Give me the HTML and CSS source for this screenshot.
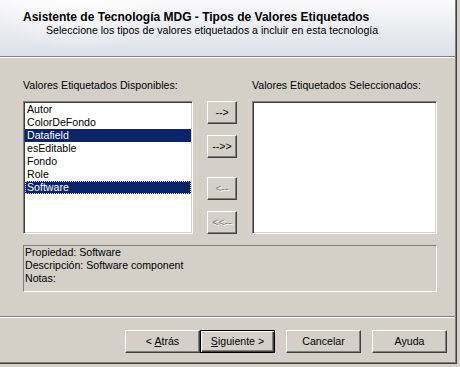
FILE: index.html
```html
<!DOCTYPE html>
<html lang="es">
<head>
<meta charset="utf-8">
<title>Asistente de Tecnología MDG</title>
<link rel="stylesheet" href="styles.css">
</head>
<body>
<div class="frame">
  <div class="window">
    <header class="hdr">
      <div class="title">Asistente de Tecnología MDG - Tipos de Valores Etiquetados</div>
      <div class="subtitle">Seleccione los tipos de valores etiquetados a incluir en esta tecnología</div>
    </header>
    <main class="content">
      <div class="pick">
        <div class="lbl lbl-left">Valores Etiquetados Disponibles:</div>
        <div class="lbl lbl-right">Valores Etiquetados Seleccionados:</div>
        <ul class="list list-left">
          <li>Autor</li>
          <li>ColorDeFondo</li>
          <li class="sel">Datafield</li>
          <li>esEditable</li>
          <li>Fondo</li>
          <li>Role</li>
          <li class="sel focus">Software</li>
        </ul>
        <div class="movers">
          <button class="btn mv">--&gt;</button>
          <button class="btn mv">--&gt;&gt;</button>
          <button class="btn mv gap-big" disabled>&lt;--</button>
          <button class="btn mv" disabled>&lt;&lt;--</button>
        </div>
        <ul class="list list-right"></ul>
      </div>
      <div class="info">
        <div>Propiedad: Software</div>
        <div>Descripción: Software component</div>
        <div>Notas:</div>
      </div>
    </main>
    <div class="sep"></div>
    <footer class="foot">
      <button class="btn fb">&lt; <u>A</u>trás</button>
      <button class="btn fb def"><u>S</u>iguiente &gt;</button>
      <button class="btn fb ml">Cancelar</button>
      <button class="btn fb ml">Ayuda</button>
    </footer>
  </div>
</div>
</body>
</html>
```
FILE: styles.css
```css
html, body {
  margin: 0;
  padding: 0;
  background: #d4d0c8;
}
body {
  font-family: "Liberation Sans", Arial, sans-serif;
  font-size: 10.6px;
  line-height: 13px;
  color: #000;
}
.frame {
  width: 456px;
  height: 363px;
  border-right: 1px solid #404040;
  border-bottom: 1px solid #404040;
}
.window {
  height: 362px;
  border-right: 1px solid #808080;
  border-bottom: 1px solid #808080;
  display: flex;
  flex-direction: column;
}
.hdr {
  height: 57px;
  box-sizing: border-box;
  padding-top: 10px;
  padding-left: 23px;
  border-bottom: 1px solid #808080;
  background:
    radial-gradient(ellipse 120px 60px at 80px 10px, rgba(255,255,255,0.6), rgba(255,255,255,0) 70%),
    linear-gradient(180deg, #fbfbfc 0%, #eceef2 45%, #dce0e8 100%);
}
.title {
  font-weight: bold;
  font-size: 12px;
  line-height: 14px;
}
.subtitle {
  padding-left: 23px;
  line-height: 13px;
}
.content {
  border-top: 1px solid #fff;
  padding: 21px 0 0 23px;
}
.pick {
  display: grid;
  grid-template-columns: 170px 44px 200px;
  row-gap: 9px;
}
.lbl-left { grid-column: 1; grid-row: 1; }
.lbl-right { grid-column: 3; grid-row: 1; margin-left: 15px; }
.list {
  margin: 0;
  padding: 0;
  list-style: none;
  height: 133px;
  box-sizing: border-box;
  background: #fff;
  border-top: 1px solid #808080;
  border-left: 1px solid #808080;
  border-right: 1px solid #fff;
  border-bottom: 1px solid #fff;
  box-shadow: inset 1px 1px 0 #404040, inset -1px -1px 0 #d4d0c8;
  padding: 1px;
}
.list-left { grid-column: 1; grid-row: 2; }
.list-right { grid-column: 3; grid-row: 2; margin-left: 15px; }
.list li {
  height: 13px;
  line-height: 13px;
  padding-left: 2px;
  white-space: nowrap;
}
.list li.sel {
  background: #0a246a;
  color: #fff;
}
.list li.focus {
  outline: 1px dotted #f5db95;
  outline-offset: -1px;
}
.movers {
  grid-column: 2;
  grid-row: 2;
  margin-left: 14px;
  width: 30px;
  display: flex;
  flex-direction: column;
  gap: 11px;
}
.btn {
  font: inherit;
  color: #000;
  background: #d4d0c8;
  box-sizing: border-box;
  height: 23px;
  padding: 0;
  margin: 0;
  border-top: 1px solid #fff;
  border-left: 1px solid #fff;
  border-right: 1px solid #404040;
  border-bottom: 1px solid #404040;
  box-shadow: inset -1px -1px 0 #808080;
  line-height: 19px;
  text-align: center;
}
.btn:disabled {
  color: #808080;
  text-shadow: 1px 1px 0 #fff;
}
.mv { width: 30px; }
.gap-big { margin-top: 8px; }
.info {
  margin-top: 11px;
  width: 414px;
  height: 47px;
  box-sizing: border-box;
  border-top: 1px solid #808080;
  border-left: 1px solid #808080;
  border-right: 1px solid #fff;
  border-bottom: 1px solid #fff;
  padding: 0 0 0 1px;
}
.sep {
  margin-top: 24px;
  height: 0;
  border-top: 1px solid #808080;
  border-bottom: 1px solid #fff;
}
.foot {
  display: flex;
  justify-content: flex-end;
  padding: 12px 8px 0 0;
}
.fb { width: 75px; }
.fb u { text-decoration: underline; }
.def {
  border: 1px solid #000;
  box-shadow: inset 1px 1px 0 #fff, inset -1px -1px 0 #404040, inset -2px -2px 0 #808080;
}
.ml { margin-left: 11px; }
```
